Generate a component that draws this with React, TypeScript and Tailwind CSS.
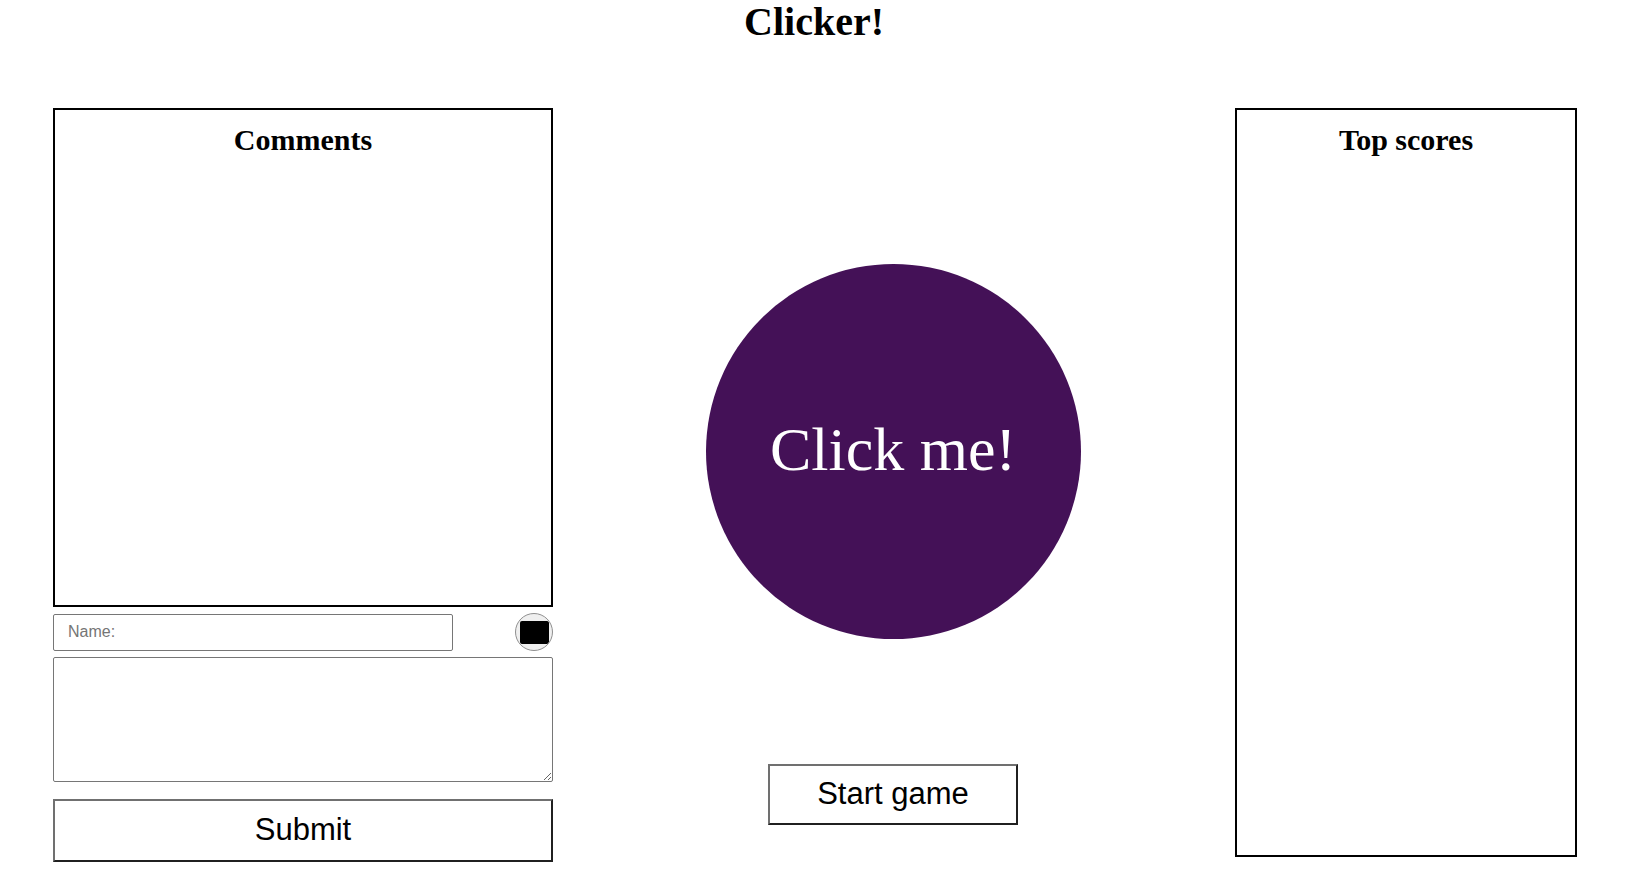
import React from 'react';

const serif = "font-['Liberation_Serif','Times_New_Roman',serif]";
const sans = "font-['Liberation_Sans',Arial,sans-serif]";

export default function App() {
  return (
    <div className={`min-h-[885px] bg-white text-black ${serif}`}>
      {/* Title */}
      <h1 className="pr-[4px] text-center text-[40px] font-bold leading-[44px]">Clicker!</h1>

      <div className="mt-[64px] flex items-start pl-[53px] pr-[55px]">
        {/* Comments column */}
        <div className="flex w-[500px] flex-col">
          <div className="h-[499px] border-2 border-black pt-[12px]">
            <h2 className="text-center text-[30px] font-bold leading-[35px]">Comments</h2>
          </div>
          <div className="mt-[6px] flex items-center justify-between">
            <input
              type="text"
              placeholder="Name:"
              className={`h-[37px] w-[400px] rounded-[2px] border border-[#767676] px-[14px] text-[16px] placeholder:text-[#757575] outline-none ${sans}`}
            />
            <div className="flex h-[38px] w-[38px] items-center justify-center overflow-hidden rounded-full border border-[#8f8f8f] bg-[#efefef]">
              <div className="h-[23px] w-[29px] rounded-[2px] bg-black" />
            </div>
          </div>
          <textarea className="mt-[6px] h-[125px] w-full rounded-[2px] border border-[#767676] outline-none" />
          <button
            className={`mt-[17px] h-[63px] w-full border-2 border-t-[#707070] border-l-[#707070] border-b-[#202020] border-r-[#202020] bg-white text-[31px] ${sans}`}
          >
            Submit
          </button>
        </div>

        {/* Game column */}
        <div className="flex flex-1 flex-col items-center pr-[2px] pt-[156px]">
          <button className="flex h-[375px] w-[375px] items-center justify-center rounded-full bg-[#441157] pb-[4px] text-[62px] text-white">
            Click me!
          </button>
          <button
            className={`mt-[125px] h-[61px] w-[250px] border-2 border-t-[#707070] border-l-[#707070] border-b-[#202020] border-r-[#202020] bg-white text-[31px] ${sans}`}
          >
            Start game
          </button>
        </div>

        {/* Scores column */}
        <div className="h-[749px] w-[342px] border-2 border-black pt-[12px]">
          <h2 className="text-center text-[30px] font-bold leading-[35px]">Top scores</h2>
        </div>
      </div>
    </div>
  );
}
